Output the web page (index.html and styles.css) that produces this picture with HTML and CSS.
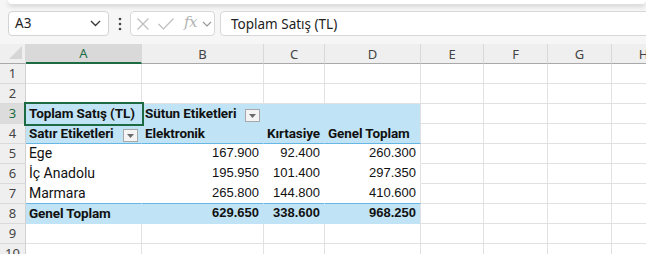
FILE: index.html
```html
<!DOCTYPE html>
<html lang="tr">
<head>
<meta charset="utf-8">
<title>Pivot</title>
<link rel="stylesheet" href="styles.css">
</head>
<body>
<div class="app">
  <div class="ribbon-edge"></div>
  <div class="formula-row">
    <div class="namebox">
      <span class="namebox-text">A3</span>
      <svg class="chev" width="11" height="7" viewBox="0 0 11 7"><path d="M1 1 L5.5 5.5 L10 1" fill="none" stroke="#3a3a3a" stroke-width="1.4"/></svg>
    </div>
    <svg class="dots" width="4" height="14" viewBox="0 0 4 14"><circle cx="2" cy="2" r="1.3" fill="#444"/><circle cx="2" cy="7" r="1.3" fill="#444"/><circle cx="2" cy="12" r="1.3" fill="#444"/></svg>
    <div class="fxbox">
      <svg class="ic-x" width="12" height="12" viewBox="0 0 12 12"><path d="M0.5 0.5 L11.5 11.5 M11.5 0.5 L0.5 11.5" stroke="#bdbdbd" stroke-width="1.2" fill="none"/></svg>
      <svg class="ic-check" width="16" height="12" viewBox="0 0 16 12"><path d="M0.5 6 L5.5 11 L15.5 0.5" stroke="#bdbdbd" stroke-width="1.2" fill="none"/></svg>
      <span class="fx">fx</span>
      <svg class="chev-sm" width="10" height="6" viewBox="0 0 10 6"><path d="M1 1 L5 5 L9 1" fill="none" stroke="#9a9a9a" stroke-width="1.2"/></svg>
    </div>
    <div class="formula-input">Toplam Satış (TL)</div>
  </div>

  <div class="sheet">
    <!-- header row -->
    <div class="hd corner"><svg width="13" height="13" viewBox="0 0 13 13"><path d="M13 0 L13 13 L0 13 Z" fill="#d6d6d6"/></svg></div>
    <div class="hd col sel-col">A</div>
    <div class="hd col">B</div>
    <div class="hd col">C</div>
    <div class="hd col">D</div>
    <div class="hd col">E</div>
    <div class="hd col">F</div>
    <div class="hd col">G</div>
    <div class="hd col">H</div>

    <!-- row 1 -->
    <div class="rh">1</div>
    <div class="c"></div><div class="c"></div><div class="c"></div><div class="c"></div><div class="c"></div><div class="c"></div><div class="c"></div><div class="c"></div>
    <!-- row 2 -->
    <div class="rh">2</div>
    <div class="c"></div><div class="c"></div><div class="c"></div><div class="c"></div><div class="c"></div><div class="c"></div><div class="c"></div><div class="c"></div>
    <!-- row 3 -->
    <div class="rh sel-row">3</div>
    <div class="c pv lbl b active">Toplam Satış (TL)</div>
    <div class="c pv lbl b has-btn"><span>Sütun Etiketleri</span><span class="ddbtn"><svg width="7" height="4" viewBox="0 0 7 4"><path d="M0 0 L7 0 L3.5 4 Z" fill="#6b6b6b"/></svg></span></div>
    <div class="c pv"></div>
    <div class="c pv last"></div>
    <div class="c"></div><div class="c"></div><div class="c"></div><div class="c"></div>
    <!-- row 4 -->
    <div class="rh">4</div>
    <div class="c pv lbl b has-btn line-b"><span>Satır Etiketleri</span><span class="ddbtn"><svg width="7" height="4" viewBox="0 0 7 4"><path d="M0 0 L7 0 L3.5 4 Z" fill="#6b6b6b"/></svg></span></div>
    <div class="c pv lbl b line-b">Elektronik</div>
    <div class="c pv lbl b line-b">Kırtasiye</div>
    <div class="c pv lbl b line-b last">Genel Toplam</div>
    <div class="c"></div><div class="c"></div><div class="c"></div><div class="c"></div>
    <!-- row 5 -->
    <div class="rh">5</div>
    <div class="c pw lbl">Ege</div>
    <div class="c pw num">167.900</div>
    <div class="c pw num">92.400</div>
    <div class="c pw num last">260.300</div>
    <div class="c"></div><div class="c"></div><div class="c"></div><div class="c"></div>
    <!-- row 6 -->
    <div class="rh">6</div>
    <div class="c pw lbl">İç Anadolu</div>
    <div class="c pw num">195.950</div>
    <div class="c pw num">101.400</div>
    <div class="c pw num last">297.350</div>
    <div class="c"></div><div class="c"></div><div class="c"></div><div class="c"></div>
    <!-- row 7 -->
    <div class="rh">7</div>
    <div class="c pw lbl line-b">Marmara</div>
    <div class="c pw num line-b">265.800</div>
    <div class="c pw num line-b">144.800</div>
    <div class="c pw num line-b last">410.600</div>
    <div class="c"></div><div class="c"></div><div class="c"></div><div class="c"></div>
    <!-- row 8 -->
    <div class="rh">8</div>
    <div class="c pv lbl b">Genel Toplam</div>
    <div class="c pv num b">629.650</div>
    <div class="c pv num b">338.600</div>
    <div class="c pv num b last">968.250</div>
    <div class="c"></div><div class="c"></div><div class="c"></div><div class="c"></div>
    <!-- row 9 -->
    <div class="rh">9</div>
    <div class="c"></div><div class="c"></div><div class="c"></div><div class="c"></div><div class="c"></div><div class="c"></div><div class="c"></div><div class="c"></div>
    <!-- row 10 -->
    <div class="rh">10</div>
    <div class="c"></div><div class="c"></div><div class="c"></div><div class="c"></div><div class="c"></div><div class="c"></div><div class="c"></div><div class="c"></div>
  </div>
</div>
</body>
</html>
```

FILE: styles.css
```css
* { box-sizing: border-box; }
html, body { margin: 0; padding: 0; }
body {
  background: #f6f6f6;
  width: 646px;
  height: 254px;
  overflow: hidden;
  font-family: "Noto Sans", sans-serif;
}
.app {
  width: 646px;
  height: 254px;
  overflow: hidden;
  display: flex;
  flex-direction: column;
}
.ribbon-edge {
  height: 4px;
  margin: 0 0 0 8px;
  background: #ffffff;
  border-radius: 0 0 8px 8px;
  box-shadow: 0 2px 5px rgba(0,0,0,0.18);
  flex: none;
}
.formula-row {
  display: flex;
  align-items: center;
  height: 25px;
  margin-top: 7px;
  padding-left: 8px;
  flex: none;
}
.formula-row > * { flex: none; }
.namebox {
  width: 101px;
  height: 25px;
  background: #fff;
  border: 1px solid #d4d4d4;
  border-radius: 4px;
  display: flex;
  align-items: center;
  justify-content: space-between;
  padding: 0 6px 0 6px;
  font-size: 13.5px;
  color: #222;
}
.namebox-text { line-height: 1; }
.chev { margin-right: 1px; }
.dots { margin-left: 9px; margin-right: 8px; }
.fxbox {
  width: 85px;
  height: 25px;
  background: #fff;
  border: 1px solid #d8d8d8;
  border-radius: 4px;
  display: flex;
  align-items: center;
  padding-left: 6px;
}
.ic-x { margin-right: 9px; }
.ic-check { margin-right: 10px; }
.fx {
  font-family: "DejaVu Serif", "Liberation Serif", serif;
  font-style: italic;
  font-size: 15px;
  color: #b3b3b3;
  line-height: 1;
  margin-top: -2px;
  letter-spacing: -0.5px;
}
.chev-sm { margin-left: 5px; }
.formula-input {
  width: 440px;
  height: 25px;
  margin-left: 5px;
  background: #fff;
  border: 1px solid #d8d8d8;
  border-radius: 4px;
  padding-left: 10px;
  display: flex;
  align-items: center;
  font-size: 13.5px;
  color: #222;
}

.sheet {
  margin-top: 8px;
  display: grid;
  grid-template-columns: 26px 116px 122px 61px 96px 63px 64px 64px 64px;
  grid-auto-rows: 20px;
  background: #fff;
  flex: none;
}
.hd {
  background: #efefef;
  border-bottom: 1px solid #a9a9a9;
  border-right: 1px solid #d9d9d9;
  font-size: 13px;
  color: #444;
  display: flex;
  align-items: center;
  justify-content: center;
}
.corner {
  justify-content: flex-end;
  align-items: flex-end;
  padding: 0 3px 4px 0;
}
.corner svg { display: block; }
.sel-col {
  background: #d9d9d9;
  color: #1c6b43;
  border-bottom: 2px solid #1c6b43;
}
.rh {
  background: #efefef;
  border-right: 1px solid #d0d0d0;
  border-bottom: 1px solid #dadada;
  font-size: 13px;
  color: #444;
  display: flex;
  align-items: flex-end;
  justify-content: center;
  padding-bottom: 1px;
}
.sel-row {
  background: #dcdcdc;
  color: #1c6b43;
}
.c {
  border-right: 1px solid #e1e1e1;
  border-bottom: 1px solid #e1e1e1;
  background: #fff;
}
.pv {
  background: #c0e4f5;
  border-right-color: #c0e4f5;
  border-bottom-color: #c0e4f5;
}
.pw {
  background: #fff;
  border-right-color: #fff;
  border-bottom-color: #fff;
}
.last { border-right-color: #e1e1e1; }
.line-b { border-bottom-color: #68b6e4; }
.lbl {
  font-family: "Roboto", "Noto Sans", sans-serif;
  font-size: 14px;
  color: #111;
  padding-left: 3px;
  display: flex;
  align-items: flex-end;
  padding-bottom: 2px;
  white-space: nowrap;
  overflow: hidden;
}
.lbl.b { font-weight: 700; font-size: 13.5px; letter-spacing: -0.1px; }
.num {
  font-family: "Liberation Sans", Arial, sans-serif;
  font-size: 13px;
  color: #111;
  display: flex;
  align-items: flex-end;
  justify-content: flex-end;
  padding-right: 4px;
  padding-bottom: 3px;
}
.num.b { font-weight: 700; }
.active {
  position: relative;
  z-index: 2;
  outline: 2px solid #1c6b43;
  outline-offset: 0px;
}
.has-btn {
  justify-content: space-between;
  padding-right: 3px;
}
.ddbtn {
  width: 15px;
  height: 13px;
  border: 1px solid #a8a8a8;
  background: #f4f4f4;
  display: flex;
  align-items: center;
  justify-content: center;
  margin-bottom: -1px;
  flex: none;
}
.ddbtn svg { display: block; }
```
